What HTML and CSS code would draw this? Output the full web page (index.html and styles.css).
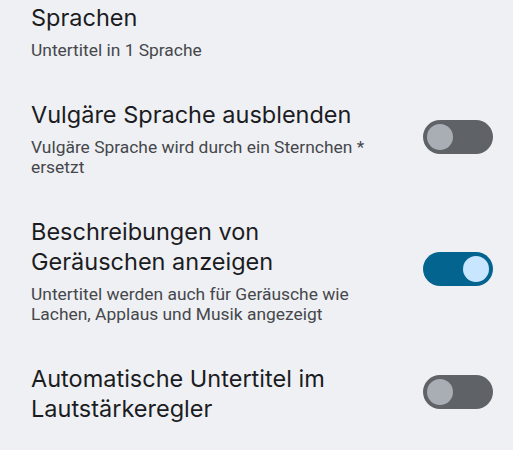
FILE: index.html
```html
<!DOCTYPE html>
<html lang="de">
<head>
<meta charset="utf-8">
<link rel="stylesheet" href="styles.css">
</head>
<body>
<div class="list">
  <div class="row row-first">
    <div class="text">
      <div class="title">Sprachen</div>
      <div class="sub">Untertitel in 1 Sprache</div>
    </div>
  </div>
  <div class="row">
    <div class="text">
      <div class="title">Vulgäre Sprache ausblenden</div>
      <div class="sub">Vulgäre Sprache wird durch ein Sternchen * ersetzt</div>
    </div>
    <div class="switch"><div class="knob"></div></div>
  </div>
  <div class="row">
    <div class="text">
      <div class="title">Beschreibungen von Geräuschen anzeigen</div>
      <div class="sub">Untertitel werden auch für Geräusche wie Lachen, Applaus und Musik angezeigt</div>
    </div>
    <div class="switch on"><div class="knob"></div></div>
  </div>
  <div class="row">
    <div class="text">
      <div class="title">Automatische Untertitel im Lautstärkeregler</div>
    </div>
    <div class="switch"><div class="knob"></div></div>
  </div>
</div>
</body>
</html>
```
FILE: styles.css
```css
html, body {
  margin: 0;
  padding: 0;
  background: #eff0f3;
}
body {
  width: 513px;
  height: 450px;
  overflow: hidden;
}
.list {
  display: flex;
  flex-direction: column;
}
.row {
  display: flex;
  align-items: center;
  padding: 20px 20px 20px 31px;
}
.row-first {
  padding-top: 3px;
}
.text {
  flex: 1;
  min-width: 0;
  padding-right: 30px;
}
.title {
  font-family: "Inter", "Roboto", sans-serif;
  font-size: 23.5px;
  line-height: 30px;
  color: #1b1c1f;
}
.sub {
  margin-top: 7px;
  font-family: "Roboto", sans-serif;
  font-size: 17.4px;
  line-height: 20px;
  color: #45474c;
}
.switch {
  flex: none;
  width: 70px;
  height: 34px;
  border-radius: 17px;
  background: #5f6368;
  display: flex;
  align-items: center;
  padding: 0 4px;
  box-sizing: border-box;
  margin-bottom: 4px;
}
.knob {
  width: 26px;
  height: 26px;
  border-radius: 50%;
  background: #a9aeb5;
}
.switch.on {
  background: #03658f;
  justify-content: flex-end;
}
.switch.on .knob {
  background: #c8e6ff;
}
```
